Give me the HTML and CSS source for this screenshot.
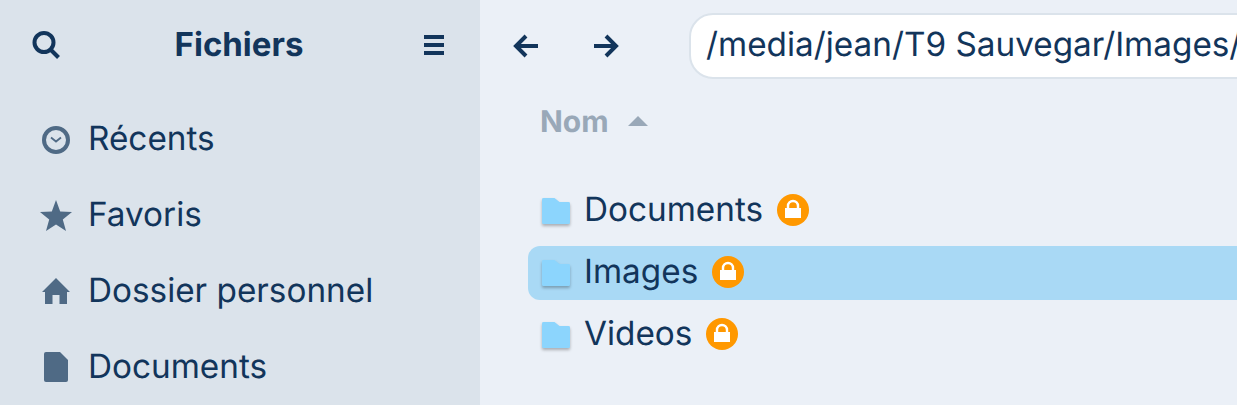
FILE: index.html
```html
<!DOCTYPE html>
<html lang="fr">
<head>
<meta charset="utf-8">
<title>Fichiers</title>
<link rel="stylesheet" href="styles.css">
</head>
<body>
<div class="app">
  <aside class="sidebar">
    <header class="side-head">
      <svg class="head-icon" viewBox="0 0 28 28"><circle cx="12" cy="11.500" r="9.500" fill="none" stroke="#12355b" stroke-width="4"/><path d="M18.500 18.500L26.500 26.500" stroke="#12355b" stroke-width="4"/></svg>
      <h1 class="side-title">Fichiers</h1>
      <svg class="head-icon menu" viewBox="0 0 20 20"><path d="M0 0h20v4H0zM0 8h20v4H0zM0 16h20v4H0z" fill="#12355b"/></svg>
    </header>
    <nav class="side-list">
      <a class="side-item"><span class="side-ico"><svg viewBox="0 0 28 28" width="28" height="28"><circle cx="14" cy="14" r="12" fill="none" stroke="#4f6a85" stroke-width="4"/><path d="M9 11.500l5 4 5-4" fill="none" stroke="#4f6a85" stroke-width="1.800"/></svg></span><span class="side-label">Récents</span></a>
      <a class="side-item"><span class="side-ico"><svg viewBox="0 0 32 32" width="32" height="32"><path d="M16 0l4.200 11.400L32 12l-9.200 7.400L26 31l-10-6.600L6 31l3.200-11.600L0 12l11.800-.6z" fill="#4f6a85"/></svg></span><span class="side-label">Favoris</span></a>
      <a class="side-item"><span class="side-ico raised"><svg viewBox="0 0 28 26" width="28" height="26"><path d="M14 0L28 14h-3v12h-7.500v-9h-7v9H3V14H0z" fill="#4f6a85"/></svg></span><span class="side-label">Dossier personnel</span></a>
      <a class="side-item"><span class="side-ico raised"><svg viewBox="0 0 24 30" width="24" height="30"><path d="M2 0h14l8 8v20a2 2 0 0 1-2 2H2a2 2 0 0 1-2-2V2a2 2 0 0 1 2-2z" fill="#4f6a85"/></svg></span><span class="side-label">Documents</span></a>
    </nav>
  </aside>
  <main class="main">
    <div class="toolbar">
      <svg class="nav-icon" viewBox="0 0 26 24"><path d="M25 12H3M13 2L3 12l10 10" fill="none" stroke="#12355b" stroke-width="4"/></svg>
      <svg class="nav-icon" viewBox="0 0 26 24"><path d="M1 12h22M13 2l10 10-10 10" fill="none" stroke="#12355b" stroke-width="4"/></svg>
      <div class="path-bar">/media/jean/T9 Sauvegar/Images/</div>
    </div>
    <div class="col-head"><span class="col-label">Nom</span><i class="sort-up"></i></div>
    <ul class="files">
      <li class="file"><svg class="folder" viewBox="0 0 28 26"><path d="M0 1.500a1.500 1.500 0 0 1 1.500-1.500h11l5 4h9a1.500 1.500 0 0 1 1.500 1.500v19a1.500 1.500 0 0 1-1.500 1.500h-25a1.500 1.500 0 0 1-1.500-1.500z" fill="#8cd5fd"/></svg><span class="file-name">Documents</span><span class="lock"><svg viewBox="0 0 32 32"><circle cx="16" cy="16" r="16" fill="#ff9800"/><path d="M11 15v-3a5 5 0 0 1 10 0V15" fill="none" stroke="#fff" stroke-width="2.400"/><rect x="8" y="14" width="16" height="10" fill="#fff"/></svg></span></li>
      <li class="file selected"><svg class="folder" viewBox="0 0 28 26"><path d="M0 1.500a1.500 1.500 0 0 1 1.500-1.500h11l5 4h9a1.500 1.500 0 0 1 1.500 1.500v19a1.500 1.500 0 0 1-1.500 1.500h-25a1.500 1.500 0 0 1-1.500-1.500z" fill="#8cd5fd"/></svg><span class="file-name">Images</span><span class="lock"><svg viewBox="0 0 32 32"><circle cx="16" cy="16" r="16" fill="#ff9800"/><path d="M11 15v-3a5 5 0 0 1 10 0V15" fill="none" stroke="#fff" stroke-width="2.400"/><rect x="8" y="14" width="16" height="10" fill="#fff"/></svg></span></li>
      <li class="file"><svg class="folder" viewBox="0 0 28 26"><path d="M0 1.500a1.500 1.500 0 0 1 1.500-1.500h11l5 4h9a1.500 1.500 0 0 1 1.500 1.500v19a1.500 1.500 0 0 1-1.500 1.500h-25a1.500 1.500 0 0 1-1.500-1.500z" fill="#8cd5fd"/></svg><span class="file-name">Videos</span><span class="lock"><svg viewBox="0 0 32 32"><circle cx="16" cy="16" r="16" fill="#ff9800"/><path d="M11 15v-3a5 5 0 0 1 10 0V15" fill="none" stroke="#fff" stroke-width="2.400"/><rect x="8" y="14" width="16" height="10" fill="#fff"/></svg></span></li>
    </ul>
  </main>
</div>
</body>
</html>
```
FILE: styles.css
```css
html, body {
  margin: 0;
  height: 100%;
  overflow: hidden;
}
body {
  font-family: Inter, "Noto Sans", sans-serif;
  font-size: 33.3px;
  color: #12355b;
  text-rendering: geometricPrecision;
}
.app {
  display: flex;
  width: 1237px;
  height: 405px;
  overflow: hidden;
}
.sidebar {
  flex: 0 0 480px;
  background: #dbe3eb;
  box-sizing: border-box;
  padding-top: 13px;
}
.side-head {
  display: flex;
  align-items: center;
  justify-content: space-between;
  height: 64px;
  padding: 0 36px 2px 32px;
}
.head-icon {
  width: 28px;
  height: 28px;
  display: block;
}
.head-icon.menu {
  width: 20px;
  height: 20px;
}
.side-title {
  margin: 0 3px 3px -3px;
  font-size: 33px;
  font-weight: 700;
  line-height: 40px;
}
.side-list {
  display: flex;
  flex-direction: column;
  padding-top: 23px;
}
.side-item {
  display: flex;
  align-items: center;
  height: 76px;
  padding-left: 40px;
}
.side-ico {
  flex: 0 0 32px;
  width: 32px;
  display: flex;
  justify-content: center;
  margin-right: 16px;
}
.side-ico.raised {
  margin-bottom: 2px;
}
.side-label {
  margin-bottom: 3px;
}
.main {
  flex: 1;
  min-width: 0;
  background: #ebf0f7;
  box-sizing: border-box;
  padding: 13px 0 0 33px;
}
.toolbar {
  display: flex;
  align-items: center;
  height: 66px;
}
.nav-icon {
  width: 26px;
  height: 24px;
  flex: none;
  margin-right: 54px;
}
.nav-icon + .nav-icon {
  margin-right: 70px;
}
.path-bar {
  flex: none;
  width: 700px;
  height: 66px;
  box-sizing: border-box;
  background: #fff;
  border: 2px solid #dbe3eb;
  border-radius: 24px;
  padding-left: 15px;
  line-height: 60px;
  white-space: nowrap;
}
.col-head {
  display: flex;
  align-items: center;
  height: 40px;
  margin: 22px 0 0 27px;
  color: #99a8b8;
  font-size: 30px;
  font-weight: 700;
  gap: 19px;
}
.col-label {
  margin-top: 2px;
}
.sort-up {
  width: 0;
  height: 0;
  border-left: 10px solid transparent;
  border-right: 10px solid transparent;
  border-bottom: 10px solid #99a8b8;
}
.files {
  list-style: none;
  margin: 43px 0 0 15px;
  padding: 0;
  display: flex;
  flex-direction: column;
  gap: 8px;
}
.file {
  display: flex;
  align-items: center;
  height: 54px;
  padding-left: 14px;
  border-radius: 12px 0 0 12px;
}
.file.selected {
  background: #a9d9f5;
}
.folder {
  width: 28px;
  height: 26px;
  flex: none;
  margin-right: 14px;
  filter: drop-shadow(0 2px 1.5px rgba(0, 0, 0, 0.28));
}
.file-name {
  margin-bottom: 2px;
}
.lock {
  width: 32px;
  height: 32px;
  flex: none;
  margin: 0 0 2px 13.5px;
}
.lock svg {
  display: block;
  width: 32px;
  height: 32px;
}
```
